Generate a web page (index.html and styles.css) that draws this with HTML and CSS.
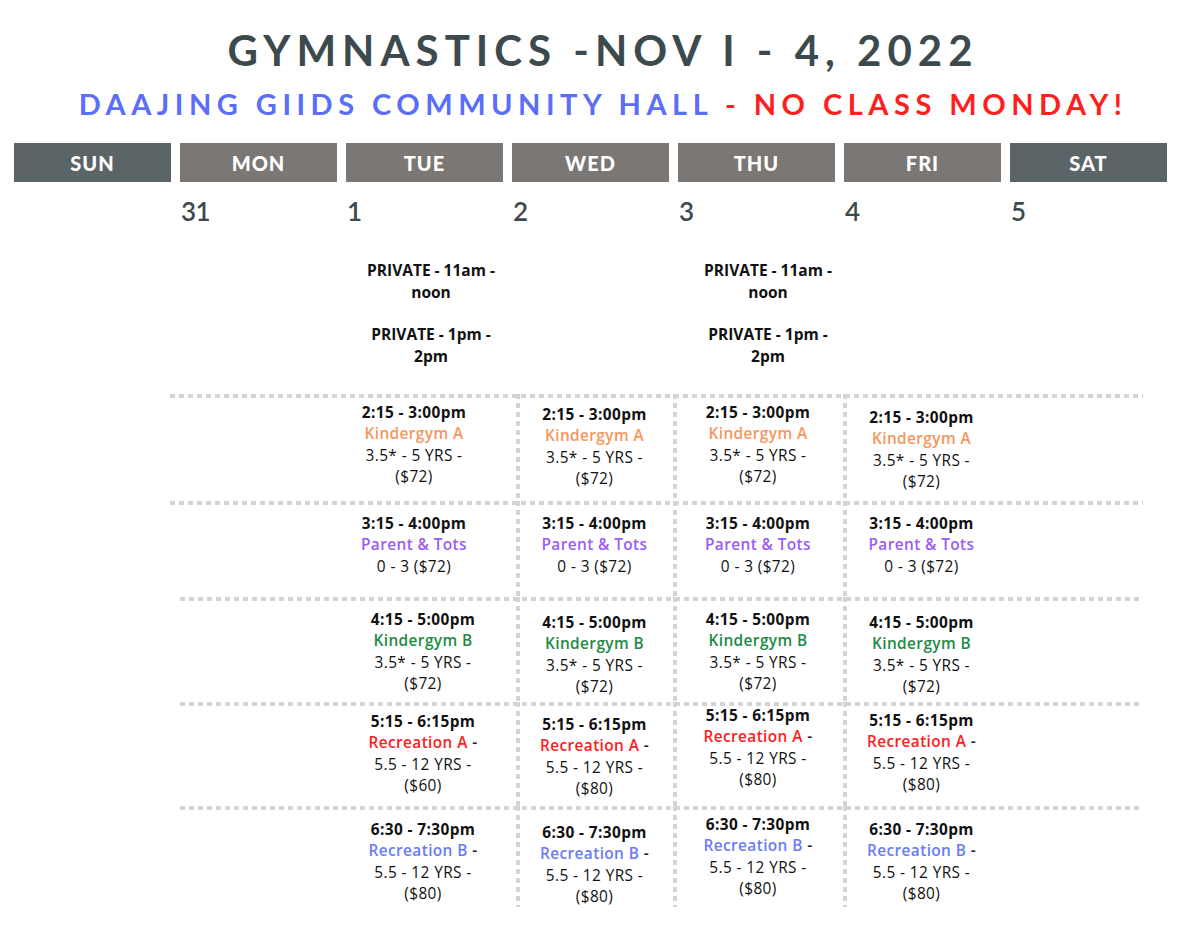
FILE: index.html
```html
<!DOCTYPE html>
<html lang="en">
<head>
<meta charset="utf-8">
<title>Gymnastics - Nov 1 - 4, 2022</title>
<link rel="stylesheet" href="styles.css">
</head>
<body>
<main class="page">
  <h1 class="title">GYMNASTICS -NOV I - 4, 2022</h1>
  <p class="subtitle"><span class="blue">DAAJING GIIDS COMMUNITY HALL</span> <span class="red">- NO CLASS MONDAY!</span></p>

  <div class="weekdays">
    <div class="wd end">SUN</div>
    <div class="wd">MON</div>
    <div class="wd">TUE</div>
    <div class="wd">WED</div>
    <div class="wd">THU</div>
    <div class="wd">FRI</div>
    <div class="wd end">SAT</div>
  </div>

  <div class="dates">
    <div></div>
    <div class="num">31</div>
    <div class="num">1</div>
    <div class="num">2</div>
    <div class="num">3</div>
    <div class="num">4</div>
    <div class="num">5</div>
  </div>

  <div class="private">
    <div></div>
    <div class="priv">
      <p>PRIVATE - 11am -<br>noon</p>
      <p>PRIVATE - 1pm -<br>2pm</p>
    </div>
    <div></div>
    <div class="priv">
      <p>PRIVATE - 11am -<br>noon</p>
      <p>PRIVATE - 1pm -<br>2pm</p>
    </div>
  </div>

  <div class="schedule">
    <div class="row r1">
      <div class="cell blank"></div>
      <div class="cell tue"><div class="slot"><b>2:15 - 3:00pm</b><span class="c-orange">Kindergym A</span><span>3.5* - 5 YRS -</span><span>($72)</span></div></div>
      <div class="cell vl"><div class="slot dn2"><b>2:15 - 3:00pm</b><span class="c-orange">Kindergym A</span><span>3.5* - 5 YRS -</span><span>($72)</span></div></div>
      <div class="cell vl"><div class="slot"><b>2:15 - 3:00pm</b><span class="c-orange">Kindergym A</span><span>3.5* - 5 YRS -</span><span>($72)</span></div></div>
      <div class="cell vl"><div class="slot dn5"><b>2:15 - 3:00pm</b><span class="c-orange">Kindergym A</span><span>3.5* - 5 YRS -</span><span>($72)</span></div></div>
      <div class="cell blank"></div>
    </div>
    <div class="row r2">
      <div class="cell blank"></div>
      <div class="cell tue"><div class="slot"><b>3:15 - 4:00pm</b><span class="c-purple">Parent &amp; Tots</span><span>0 - 3 ($72)</span></div></div>
      <div class="cell vl"><div class="slot"><b>3:15 - 4:00pm</b><span class="c-purple">Parent &amp; Tots</span><span>0 - 3 ($72)</span></div></div>
      <div class="cell vl"><div class="slot"><b>3:15 - 4:00pm</b><span class="c-purple">Parent &amp; Tots</span><span>0 - 3 ($72)</span></div></div>
      <div class="cell vl"><div class="slot"><b>3:15 - 4:00pm</b><span class="c-purple">Parent &amp; Tots</span><span>0 - 3 ($72)</span></div></div>
      <div class="cell blank"></div>
    </div>
    <div class="row r3 inset">
      <div class="cell blank"></div>
      <div class="cell tue"><div class="slot"><b>4:15 - 5:00pm</b><span class="c-green">Kindergym B</span><span>3.5* - 5 YRS -</span><span>($72)</span></div></div>
      <div class="cell vl"><div class="slot dn3"><b>4:15 - 5:00pm</b><span class="c-green">Kindergym B</span><span>3.5* - 5 YRS -</span><span>($72)</span></div></div>
      <div class="cell vl"><div class="slot"><b>4:15 - 5:00pm</b><span class="c-green">Kindergym B</span><span>3.5* - 5 YRS -</span><span>($72)</span></div></div>
      <div class="cell vl"><div class="slot dn3"><b>4:15 - 5:00pm</b><span class="c-green">Kindergym B</span><span>3.5* - 5 YRS -</span><span>($72)</span></div></div>
      <div class="cell blank"></div>
    </div>
    <div class="row r4 inset">
      <div class="cell blank"></div>
      <div class="cell tue"><div class="slot"><b>5:15 - 6:15pm</b><span><em class="c-red">Recreation A</em> -</span><span>5.5 - 12 YRS -</span><span>($60)</span></div></div>
      <div class="cell vl"><div class="slot dn3"><b>5:15 - 6:15pm</b><span><em class="c-red">Recreation A</em> -</span><span>5.5 - 12 YRS -</span><span>($80)</span></div></div>
      <div class="cell vl"><div class="slot up6"><b>5:15 - 6:15pm</b><span><em class="c-red">Recreation A</em> -</span><span>5.5 - 12 YRS -</span><span>($80)</span></div></div>
      <div class="cell vl"><div class="slot up1"><b>5:15 - 6:15pm</b><span><em class="c-red">Recreation A</em> -</span><span>5.5 - 12 YRS -</span><span>($80)</span></div></div>
      <div class="cell blank"></div>
    </div>
    <div class="row r5 inset">
      <div class="cell blank"></div>
      <div class="cell tue"><div class="slot"><b>6:30 - 7:30pm</b><span><em class="c-blue">Recreation B</em> -</span><span>5.5 - 12 YRS -</span><span>($80)</span></div></div>
      <div class="cell vl"><div class="slot dn3"><b>6:30 - 7:30pm</b><span><em class="c-blue">Recreation B</em> -</span><span>5.5 - 12 YRS -</span><span>($80)</span></div></div>
      <div class="cell vl"><div class="slot up5"><b>6:30 - 7:30pm</b><span><em class="c-blue">Recreation B</em> -</span><span>5.5 - 12 YRS -</span><span>($80)</span></div></div>
      <div class="cell vl"><div class="slot"><b>6:30 - 7:30pm</b><span><em class="c-blue">Recreation B</em> -</span><span>5.5 - 12 YRS -</span><span>($80)</span></div></div>
      <div class="cell blank"></div>
    </div>
  </div>
</main>
</body>
</html>
```
FILE: styles.css
```css
* { box-sizing: border-box; }

html, body {
  margin: 0;
  padding: 0;
  background: #ffffff;
}

body {
  font-family: "Open Sans", "Liberation Sans", sans-serif;
  color: #111111;
}

.page {
  width: 1200px;
  height: 925px;
  overflow: hidden;
}

.title {
  margin: 0;
  padding-top: 28px;
  padding-left: 6px;
  font-family: "Lato", "Liberation Sans", sans-serif;
  font-weight: 700;
  font-size: 42px;
  line-height: 44px;
  letter-spacing: 6px;
  text-align: center;
  color: #3d4a4d;
}

.subtitle {
  margin: 16px 0 0;
  padding-left: 6px;
  font-family: "Lato", "Liberation Sans", sans-serif;
  font-weight: 700;
  font-size: 29px;
  line-height: 32px;
  letter-spacing: 5.5px;
  text-align: center;
}

.blue { color: #5a6ef8; }
.red { color: #ff1e1e; }

.weekdays {
  margin: 23px 0 0 14px;
  width: 1153px;
  display: grid;
  grid-template-columns: repeat(7, 1fr);
  column-gap: 9px;
}

.wd {
  height: 39px;
  background: #7b7774;
  color: #ffffff;
  font-family: "Lato", "Liberation Sans", sans-serif;
  font-weight: 900;
  font-size: 20px;
  letter-spacing: 1px;
  line-height: 40px;
  text-align: center;
}

.wd.end { background: #5b6568; }

.dates {
  margin: 0 0 0 14px;
  width: 1153px;
  display: grid;
  grid-template-columns: repeat(7, 1fr);
  column-gap: 9px;
  padding-top: 14px;
}

.num {
  padding-left: 1px;
  font-family: "Lato", "Liberation Sans", sans-serif;
  font-weight: 600;
  font-size: 26px;
  line-height: 30px;
  letter-spacing: -0.5px;
  color: #3d4a4d;
}

.private {
  margin: 33px 0 0 170px;
  display: grid;
  grid-template-columns: 156px 190px 157px 170px;
}

.priv {
  padding-left: 20px;
  text-align: center;
  font-weight: 700;
  font-size: 15.5px;
  line-height: 22px;
}

.priv p { margin: 0; }
.priv p + p { margin-top: 20px; }

.schedule {
  margin: 27px 0 0 170px;
  width: 973px;
}

.row {
  display: grid;
  grid-template-columns: 156px 190px 157px 170px 157px 143px;
  background-image: repeating-linear-gradient(90deg, #d4d4d4 0 5px, transparent 5px 9px);
  background-size: 100% 4px;
  background-repeat: no-repeat;
  background-position: 0 0;
}

.row.inset {
  background-size: calc(100% - 10px) 4px;
  background-position: 10px 0;
}

.r1 { height: 107px; }
.r2 { height: 96px; }
.r3 { height: 105px; }
.r4 { height: 104px; }
.r5 { height: 99px; }

.r1 .cell { padding-top: 8px; }
.r2 .cell { padding-top: 12px; }
.r3 .cell { padding-top: 12px; }
.r4 .cell { padding-top: 9px; }
.r5 .cell { padding-top: 13px; }

.r1 .tue, .r2 .tue { padding-right: 14px; }
.r3 .tue, .r4 .tue, .r5 .tue { padding-left: 4px; }

.cell.vl {
  background-image: repeating-linear-gradient(180deg, #d4d4d4 0 5px, transparent 5px 9px);
  background-size: 4px 100%;
  background-repeat: no-repeat;
  background-position: 0 0;
}

.slot {
  text-align: center;
  font-size: 15.4px;
  line-height: 21.3px;
  letter-spacing: 0.4px;
}

.slot b, .slot span { display: block; }
.slot b { font-weight: 700; color: #111111; }
.slot em { font-style: normal; font-weight: 600; }
.slot span:nth-child(2) { font-weight: 600; color: #222222; }

.c-orange { color: #f7965a !important; }
.c-purple { color: #9b5cf5 !important; }
.c-green { color: #1d8a45 !important; }
.c-red { color: #fe2020; }
.c-blue { color: #6a7cf5; }

.dn2 { margin-top: 2px; }
.dn3 { margin-top: 3px; }
.dn5 { margin-top: 5px; }
.up1 { margin-top: -1px; }
.up5 { margin-top: -5px; }
.up6 { margin-top: -6px; }
```
